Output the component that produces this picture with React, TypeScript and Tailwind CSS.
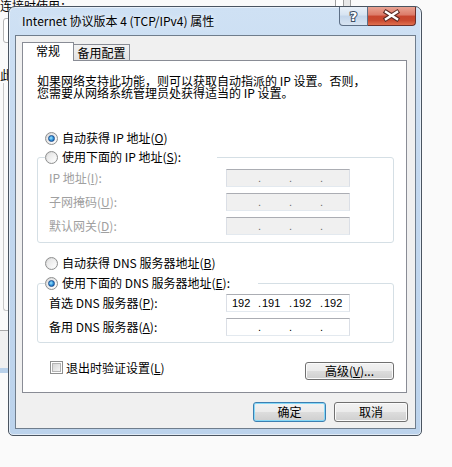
import type { ReactNode } from 'react'

function Radio({ checked }: { checked?: boolean }) {
  return (
    <span className="flex h-[13px] w-[13px] shrink-0 items-center justify-center rounded-full border border-[#8e8f8f] bg-[linear-gradient(135deg,#d4d4d4,#fdfdfd)]">
      <span className="flex h-[9px] w-[9px] items-center justify-center rounded-full bg-[linear-gradient(135deg,#e2e2e2,#ffffff)]">
        {checked && (
          <span className="h-[7px] w-[7px] rounded-full border border-[#1d4f8f] bg-[radial-gradient(circle_at_40%_40%,#9fe6ff_0%,#2c8fd8_55%,#0d4e9c_100%)]" />
        )}
      </span>
    </span>
  )
}

function Checkbox() {
  return (
    <span className="flex h-[13px] w-[13px] shrink-0 items-center justify-center border border-[#8e8f8f] bg-white">
      <span className="h-[9px] w-[9px] border border-[#b4b4b4] bg-[linear-gradient(135deg,#d6d6d6,#f4f4f4)]" />
    </span>
  )
}

function U({ children }: { children: ReactNode }) {
  return <span className="underline underline-offset-[1px]">{children}</span>
}

function IpBox({ values, disabled }: { values?: string[]; disabled?: boolean }) {
  const parts = values ?? ['', '', '', '']
  return (
    <div
      className={`flex h-[18px] w-[124px] items-center overflow-hidden border border-t-[#abadb3] border-x-[#dbdfe6] border-b-[#e3e9ef] font-['Liberation_Sans',sans-serif] text-[11px] leading-[12px] ${
        disabled ? 'bg-[#f0f0f0] text-[#6d6d6d]' : 'bg-white text-black'
      }`}
    >
      {parts.map((p, i) => (
        <div key={i} className="flex h-full w-[31px] shrink-0 items-center">
          {i > 0 && <span className="w-[4px]">.</span>}
          <span className={i === 0 ? 'pl-[5px]' : ''}>{p}</span>
        </div>
      ))}
    </div>
  )
}

function FieldRow({ label, disabled, values }: { label: ReactNode; disabled?: boolean; values?: string[] }) {
  return (
    <div className="flex items-center">
      <span className={`w-[188px] pl-[11px] ${disabled ? 'text-[#a0a0a0]' : 'text-black'}`}>{label}</span>
      <IpBox disabled={disabled} values={values} />
    </div>
  )
}

function Button({ children, className = '', primary }: { children: ReactNode; className?: string; primary?: boolean }) {
  return (
    <div
      className={`flex items-center justify-center rounded-[3px] border bg-[linear-gradient(180deg,#f2f2f2_0%,#ebebeb_49%,#dddddd_50%,#cfcfcf_100%)] ${
        primary ? 'border-[#3c7fb1] shadow-[inset_0_0_0_1px_#86d8f7]' : 'border-[#707070] shadow-[inset_0_0_0_1px_#fbfbfb]'
      } ${className}`}
    >
      {children}
    </div>
  )
}

function Backdrop() {
  return (
    <>
      <span className="absolute left-0 top-0">连接时使用：</span>
      <div className="absolute left-[3px] top-[18px] h-[25px] w-[20px] rounded-[3px] border border-[#b5b5b5] bg-white" />
      <span className="absolute left-0 top-[69px]">此</span>
      <div className="absolute left-[3px] top-[83px] h-[228px] w-[20px] rounded-bl-[3px] border-b border-l border-[#c8c8c8]" />
      <div className="absolute left-0 top-[330px] h-[43px] w-[20px] border-t border-b-[5px] border-t-[#a8a8a8] border-b-[#b9d1ea] bg-[#f0f0f0]" />
      <div className="absolute left-[335px] top-0 flex h-[8px] w-[16px] border-x border-[#a0a0a0] bg-white">
        <div className="ml-[7px] flex-1 border-l border-[#a0a0a0] bg-[#e8e8e8]" />
      </div>
    </>
  )
}

function TitleBar() {
  return (
    <div className="flex h-[28px] shrink-0">
      <span className="self-center pl-[7px] text-[12px] leading-[14px] text-black [text-shadow:0_0_6px_#ffffff]">
        Internet 协议版本 4 (TCP/IPv4) 属性
      </span>
      <div className="ml-auto flex self-start">
        <div className="h-[19px] w-[29px] rounded-bl-[4px] border border-t-0 border-[#5d6f86] bg-[linear-gradient(180deg,#e9f0f8_0%,#d6e3f1_45%,#c3d5ea_50%,#d7e4f2_100%)]">
          <svg width="27" height="18" viewBox="0 0 27 18">
            <text
              x="13.5"
              y="14"
              textAnchor="middle"
              fontSize="13"
              fontWeight="bold"
              fontFamily="DejaVu Sans, sans-serif"
              fill="#ffffff"
              stroke="#3c4d62"
              strokeWidth="2"
              paintOrder="stroke"
            >
              ?
            </text>
          </svg>
        </div>
        <div className="h-[19px] w-[48px] rounded-br-[4px] border border-t-0 border-l-0 border-[#6b2f2a] bg-[linear-gradient(180deg,#e9a393_0%,#dc7a68_45%,#c8452f_50%,#c94a30_75%,#e0704f_100%)]">
          <svg width="47" height="18" viewBox="0 0 47 18">
            <g strokeLinecap="square">
              <path d="M18 5 L29 12 M29 5 L18 12" stroke="#5a2a24" strokeWidth="4.5" />
              <path d="M18 5 L29 12 M29 5 L18 12" stroke="#ffffff" strokeWidth="2.4" />
            </g>
          </svg>
        </div>
      </div>
    </div>
  )
}

function GeneralTab() {
  return (
    <div className="flex h-[333px] flex-col border border-[#898c95] bg-white">
      <p className="mt-[14px] pl-[14px] leading-[12px]">
        如果网络支持此功能，则可以获取自动指派的 IP 设置。否则，
        <br />
        您需要从网络系统管理员处获得适当的 IP 设置。
      </p>

      <div className="mt-[32px] flex h-[14px] items-center gap-[4px] pl-[22px]">
        <Radio checked />
        <span>
          自动获得 IP 地址(<U>O</U>)
        </span>
      </div>

      <fieldset className="ml-[14px] mr-[12px] mt-[5px] rounded-[3px] border border-[#d5dfe5] pb-[7px]">
        <legend className="ml-[7px] flex h-[14px] w-[172px] items-center gap-[4px]">
          <Radio />
          <span>
            使用下面的 IP 地址(<U>S</U>):
          </span>
        </legend>
        <div className="flex flex-col gap-[6px] pt-[5px]">
          <FieldRow disabled label={<>IP 地址(<U>I</U>):</>} />
          <FieldRow disabled label={<>子网掩码(<U>U</U>):</>} />
          <FieldRow disabled label={<>默认网关(<U>D</U>):</>} />
        </div>
      </fieldset>

      <div className="mt-[13px] flex h-[14px] items-center gap-[4px] pl-[22px]">
        <Radio />
        <span>
          自动获得 DNS 服务器地址(<U>B</U>)
        </span>
      </div>

      <fieldset className="ml-[14px] mr-[12px] mt-[6px] rounded-[3px] border border-[#d5dfe5] pb-[6px]">
        <legend className="ml-[7px] flex h-[14px] w-[213px] items-center gap-[4px]">
          <Radio checked />
          <span>
            使用下面的 DNS 服务器地址(<U>E</U>):
          </span>
        </legend>
        <div className="flex flex-col gap-[6px] pt-[4px]">
          <FieldRow label={<>首选 DNS 服务器(<U>P</U>):</>} values={['192', '191', '192', '192']} />
          <FieldRow label={<>备用 DNS 服务器(<U>A</U>):</>} />
        </div>
      </fieldset>

      <div className="mt-[18px] flex items-start pl-[27px] pr-[12px]">
        <div className="flex h-[13px] items-center gap-[3px]">
          <Checkbox />
          <span>
            退出时验证设置(<U>L</U>)
          </span>
        </div>
        <Button className="ml-auto mt-[1px] h-[18px] w-[89px]">
          高级(<U>V</U>)...
        </Button>
      </div>
    </div>
  )
}

function Dialog() {
  return (
    <div className="absolute left-[8px] top-[6px] flex h-[430px] w-[414px] flex-col rounded-b-[5px] rounded-t-[7px] border border-[#4a5460] bg-[linear-gradient(180deg,#cfe1f4_0%,#c3d8ef_40%,#bcd3ec_100%)] pb-[6px] pl-[6px] pr-[5px] shadow-[inset_0_0_0_1px_rgba(255,255,255,0.55)]">
      <TitleBar />
      <div className="flex flex-1 flex-col border border-[#6f7d8c] bg-[#f0f0f0] pl-[6px] pr-[8px] pt-[6px]">
        <div className="flex h-[18px] items-end">
          <div className="relative z-10 -mb-px flex h-[19px] w-[52px] justify-center border border-b-0 border-[#898c95] bg-white pt-[2px]">
            常规
          </div>
          <div className="flex h-[16px] w-[56px] justify-center border border-l-0 border-b-0 border-[#898c95] bg-[linear-gradient(180deg,#f2f2f2,#e3e3e3)] pt-[2px]">
            备用配置
          </div>
        </div>
        <GeneralTab />
        <div className="mr-[-1px] mt-[9px] flex justify-end gap-[8px]">
          <Button primary className="h-[20px] w-[73px]">
            确定
          </Button>
          <Button className="h-[20px] w-[74px]">取消</Button>
        </div>
      </div>
    </div>
  )
}

export default function App() {
  return (
    <div className="relative h-[467px] w-[452px] overflow-hidden bg-[#fafafa] font-['Noto_Sans_CJK_SC',sans-serif] text-[12px] leading-[12px] text-black">
      <Backdrop />
      <Dialog />
    </div>
  )
}
